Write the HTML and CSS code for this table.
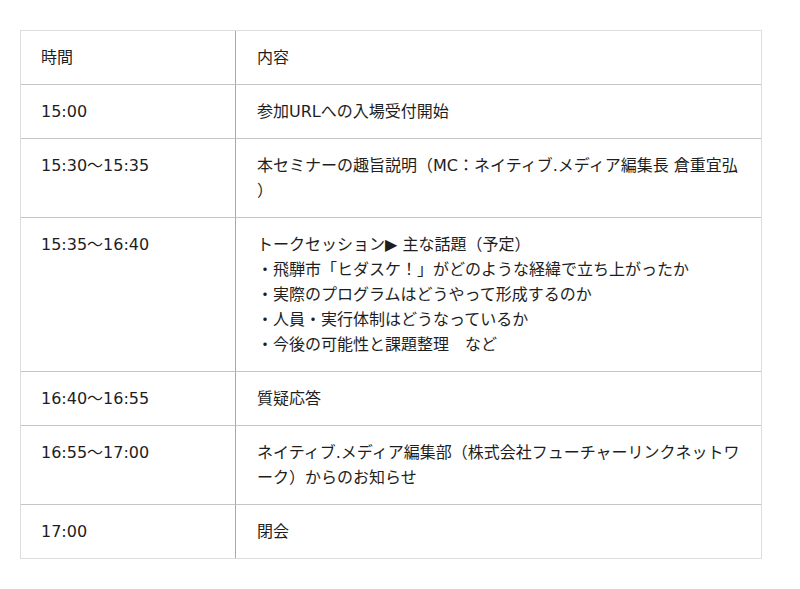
FILE: index.html
```html
<!DOCTYPE html>
<html lang="ja">
<head>
<meta charset="utf-8">
<title>タイムテーブル</title>
<link rel="stylesheet" href="styles.css">
</head>
<body>
<table class="schedule">
  <tr><td class="time">時間</td><td class="desc">内容</td></tr>
  <tr><td class="time">15:00</td><td class="desc">参加URLへの入場受付開始</td></tr>
  <tr><td class="time">15:30〜15:35</td><td class="desc">本セミナーの趣旨説明（MC：ネイティブ.メディア編集長 倉重宜弘<br>）</td></tr>
  <tr><td class="time">15:35〜16:40</td><td class="desc">トークセッション▶ 主な話題（予定）<br>・飛騨市「ヒダスケ！」がどのような経緯で立ち上がったか<br>・実際のプログラムはどうやって形成するのか<br>・人員・実行体制はどうなっているか<br>・今後の可能性と課題整理　など</td></tr>
  <tr><td class="time">16:40〜16:55</td><td class="desc">質疑応答</td></tr>
  <tr><td class="time">16:55〜17:00</td><td class="desc">ネイティブ.メディア編集部（株式会社フューチャーリンクネットワ<br>ーク）からのお知らせ</td></tr>
  <tr><td class="time">17:00</td><td class="desc">閉会</td></tr>
</table>
</body>
</html>
```
FILE: styles.css
```css
html, body {
  margin: 0;
  padding: 0;
  background: #fff;
}
body {
  padding: 30px 20px;
  font-family: "DejaVu Sans", "Noto Sans CJK JP", sans-serif;
  font-size: 16px;
  color: #1e1e1e;
}
.schedule {
  width: 742px;
  table-layout: fixed;
  border-collapse: separate;
  border-spacing: 0;
  border: 1px solid #ddd;
}
.schedule td {
  padding: 14px 20px;
  line-height: 25px;
  vertical-align: top;
  white-space: nowrap;
}
.schedule tr + tr td {
  border-top: 1px solid #c4c4c4;
}
.schedule .time {
  width: 174px;
}
.schedule .desc {
  border-left: 1px solid #a8a8a8;
  padding-left: 21px;
}
```
